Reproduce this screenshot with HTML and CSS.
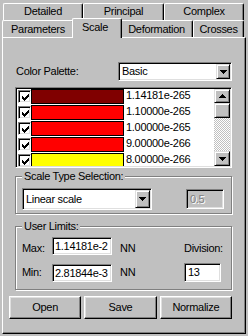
FILE: index.html
```html
<!DOCTYPE html>
<html>
<head>
<meta charset="utf-8">
<link rel="stylesheet" href="styles.css">
</head>
<body>
<div class="dlg">
  <div class="tabrow row1">
    <div class="tab w80">Detailed</div>
    <div class="tab w81">Principal</div>
    <div class="tab w80">Complex</div>
  </div>
  <div class="tabrow row2">
    <div class="tab t-params">Parameters</div>
    <div class="tab t-scale sel">Scale</div>
    <div class="tab t-deform">Deformation</div>
    <div class="tab t-cross">Crosses</div>
  </div>
  <div class="panel">
    <div class="palette-row">
      <span class="lbl">Color Palette:</span>
      <div class="combo combo-pal">
        <span class="combo-text">Basic</span>
        <span class="dd raised"><svg width="7" height="4" viewBox="0 0 7 4"><path d="M0 0h7v1H0zM1 1h5v1H1zM2 2h3v1H2zM3 3h1v1H3z"/></svg></span>
      </div>
    </div>
    <div class="listbox">
      <div class="rows">
        <div class="item"><span class="check"><svg width="7" height="7" viewBox="0 0 7 7"><path d="M0 2h1v3H0zM1 3h1v3H1zM2 4h1v3H2zM3 3h1v3H3zM4 2h1v3H4zM5 1h1v3H5zM6 0h1v3H6z"/></svg></span><span class="swatch c-dark"></span><span class="val">1.14181e-265</span></div>
        <div class="item"><span class="check"><svg width="7" height="7" viewBox="0 0 7 7"><path d="M0 2h1v3H0zM1 3h1v3H1zM2 4h1v3H2zM3 3h1v3H3zM4 2h1v3H4zM5 1h1v3H5zM6 0h1v3H6z"/></svg></span><span class="swatch c-red"></span><span class="val">1.10000e-265</span></div>
        <div class="item"><span class="check"><svg width="7" height="7" viewBox="0 0 7 7"><path d="M0 2h1v3H0zM1 3h1v3H1zM2 4h1v3H2zM3 3h1v3H3zM4 2h1v3H4zM5 1h1v3H5zM6 0h1v3H6z"/></svg></span><span class="swatch c-red"></span><span class="val">1.00000e-265</span></div>
        <div class="item"><span class="check"><svg width="7" height="7" viewBox="0 0 7 7"><path d="M0 2h1v3H0zM1 3h1v3H1zM2 4h1v3H2zM3 3h1v3H3zM4 2h1v3H4zM5 1h1v3H5zM6 0h1v3H6z"/></svg></span><span class="swatch c-red"></span><span class="val">9.00000e-266</span></div>
        <div class="item"><span class="check"><svg width="7" height="7" viewBox="0 0 7 7"><path d="M0 2h1v3H0zM1 3h1v3H1zM2 4h1v3H2zM3 3h1v3H3zM4 2h1v3H4zM5 1h1v3H5zM6 0h1v3H6z"/></svg></span><span class="swatch c-yellow"></span><span class="val">8.00000e-266</span></div>
      </div>
      <div class="vscroll">
        <div class="sbtn up raised"><svg width="7" height="4" viewBox="0 0 7 4"><path d="M3 0h1v1H3zM2 1h3v1H2zM1 2h5v1H1zM0 3h7v1H0z"/></svg></div>
        <div class="thumb raised"></div>
        <div class="track"></div>
        <div class="sbtn down raised"><svg width="7" height="4" viewBox="0 0 7 4"><path d="M0 0h7v1H0zM1 1h5v1H1zM2 2h3v1H2zM3 3h1v1H3z"/></svg></div>
      </div>
    </div>
    <div class="group g-scale">
      <span class="gtitle">Scale Type Selection:</span>
      <div class="g-scale-body">
        <div class="combo combo-lin">
          <span class="combo-text">Linear scale</span>
          <span class="dd raised"><svg width="7" height="4" viewBox="0 0 7 4"><path d="M0 0h7v1H0zM1 1h5v1H1zM2 2h3v1H2zM3 3h1v1H3z"/></svg></span>
        </div>
        <div class="edit e-step disabled">0.5</div>
      </div>
    </div>
    <div class="group g-limits">
      <span class="gtitle">User Limits:</span>
      <div class="limits">
        <span class="r1">Max:</span>
        <div class="edit e-lim">1.14181e-2</div>
        <span class="r1 nn">NN</span>
        <span class="r1">Division:</span>
        <span class="r2">Min:</span>
        <div class="edit e-lim e-min">2.81844e-3</div>
        <span class="r2 nn">NN</span>
        <div class="edit e-div">13</div>
      </div>
    </div>
    <div class="buttons">
      <button class="btn">Open</button>
      <button class="btn">Save</button>
      <button class="btn">Normalize</button>
    </div>
  </div>
</div>
</body>
</html>
```
FILE: styles.css
```css
* { box-sizing: border-box; }
html, body { margin: 0; padding: 0; }
body {
  background: #c0c0c0;
  font: 11px/13px "Liberation Sans", Arial, sans-serif;
  letter-spacing: -0.3px;
  color: #000;
  width: 248px;
  height: 336px;
  overflow: hidden;
}
.dlg { width: 248px; height: 336px; }

/* tabs */
.tabrow { display: flex; height: 17px; }
.row1 { margin-top: 3px; padding-left: 3px; }
.row2 { padding-left: 2px; }
.tab {
  flex: none;
  height: 17px;
  background: #c0c0c0;
  border-top: 1px solid #fff;
  border-left: 1px solid #fff;
  border-right: 1px solid #000;
  border-radius: 2px 2px 0 0;
  box-shadow: inset -1px 0 #808080;
  display: flex;
  justify-content: center;
  align-items: flex-start;
  white-space: nowrap;
}
.row1 .tab { padding-top: 1px; }
.row2 .tab { padding-top: 2px; }
.w80 { width: 80px; }
.w81 { width: 81px; }
.t-params { width: 72px; }
.t-scale { width: 50px; }
.t-deform { width: 73px; }
.t-cross { width: 51px; }
.tab.sel {
  position: relative;
  z-index: 2;
  height: 20px;
  margin: -2px -2px 0 -2px;
  padding-top: 2px;
  padding-right: 4px;
}

/* panel */
.panel {
  margin-left: 2px;
  width: 244px;
  height: 297px;
  border-top: 1px solid #fff;
  border-left: 1px solid #fff;
  border-right: 1px solid #000;
  border-bottom: 1px solid #000;
  box-shadow: inset -1px -1px #808080;
  padding: 24px 13px 0 12px;
}

.raised {
  background: #c0c0c0;
  border: 1px solid;
  border-color: #dfdfdf #000 #000 #dfdfdf;
  box-shadow: inset 1px 1px #fff, inset -1px -1px #808080;
}
.sunken {
  border: 1px solid;
  border-color: #808080 #fff #fff #808080;
  box-shadow: inset 1px 1px #000, inset -1px -1px #dfdfdf;
}

.palette-row { display: flex; align-items: center; height: 19px; }
.lbl { margin-left: 1px; }

.combo {
  display: flex;
  background: #fff;
  border: 1px solid;
  border-color: #808080 #fff #fff #808080;
  box-shadow: inset 1px 1px #000, inset -1px -1px #dfdfdf;
  padding: 1px;
}
.combo-pal { margin-left: auto; width: 114px; height: 19px; }
.combo-text { flex: 1; padding-left: 2px; display: flex; align-items: center; white-space: nowrap; overflow: hidden; }
.dd { width: 14px; display: flex; align-items: center; justify-content: center; }
.dd svg, .sbtn svg { display: block; shape-rendering: crispEdges; }

/* listbox */
.listbox {
  margin-top: 6px;
  width: 217px;
  height: 81px;
  display: flex;
  background: #fff;
  border: 1px solid;
  border-color: #808080 #fff #fff #808080;
  box-shadow: inset 1px 1px #000, inset -1px -1px #dfdfdf;
  padding: 1px;
}
.rows { flex: 1; overflow: hidden; }
.item { height: 16px; display: flex; align-items: flex-start; }
.check {
  flex: none;
  width: 13px;
  height: 13px;
  margin: 1px 0 0 1px;
  padding: 2px;
  background: #fff;
  border: 1px solid;
  border-color: #808080 #fff #fff #808080;
  box-shadow: inset 1px 1px #000, inset -1px -1px #dfdfdf;
}
.check svg { display: block; margin: 1px; shape-rendering: crispEdges; }
.swatch { flex: none; width: 93px; height: 15px; border: 1px solid #000; }
.c-dark { background: #800000; }
.c-red { background: #ff0000; }
.c-yellow { background: #ffff00; }
.val { margin-left: 2px; white-space: nowrap; }

.vscroll { width: 16px; flex: none; display: flex; flex-direction: column; }
.sbtn { height: 14px; display: flex; align-items: center; justify-content: center; }
.sbtn.down { height: 15px; }
.thumb { height: 15px; }
.track {
  flex: 1;
  background: repeating-conic-gradient(#fff 0 25%, #c0c0c0 0 50%) 0 0 / 2px 2px;
}

/* groups */
.group {
  border: 1px solid #808080;
  box-shadow: inset 1px 1px #fff, 1px 1px #fff;
}
.gtitle {
  display: block;
  width: max-content;
  margin: -7px 0 0 6px;
  padding: 0 2px;
  background: #c0c0c0;
  line-height: 13px;
}
.g-scale { margin-top: 8px; }
.g-scale-body {
  display: flex;
  justify-content: space-between;
  align-items: flex-start;
  padding: 5px 7px 3px 6px;
}
.combo-lin { width: 130px; height: 22px; }
.combo-lin .dd { width: 15px; }

.edit {
  background: #fff;
  border: 1px solid;
  border-color: #808080 #fff #fff #808080;
  box-shadow: inset 1px 1px #000, inset -1px -1px #dfdfdf;
  padding: 0 1px 0 2px;
  display: flex;
  align-items: center;
  white-space: nowrap;
  overflow: hidden;
}
.e-step { width: 38px; height: 20px; margin-top: 1px; padding-left: 3px; }
.disabled { background: #c0c0c0; color: #808080; text-shadow: 1px 1px #fff; }

.g-limits { margin-top: 12px; }
.limits {
  display: grid;
  grid-template-columns: 30px 60px 72px 40px;
  grid-template-rows: 18px 19px;
  row-gap: 8px;
  padding: 4px 0 7px 6px;
}
.r1 { align-self: end; white-space: nowrap; }
.r2 { align-self: center; white-space: nowrap; }
.nn { padding-left: 8px; }
.e-lim { height: 18px; }
.e-min { align-self: end; }
.e-div { width: 37px; height: 19px; padding-left: 3px; }

.buttons { display: flex; gap: 3px; margin: 6px 0 0 -6px; }
.btn {
  width: 75px;
  height: 23px;
  font: inherit;
  letter-spacing: inherit;
  color: #000;
  background: #c0c0c0;
  border: 1px solid;
  border-color: #fff #000 #000 #fff;
  box-shadow: inset -1px -1px #808080, inset 1px 1px #dfdfdf;
  padding: 0;
}
```
